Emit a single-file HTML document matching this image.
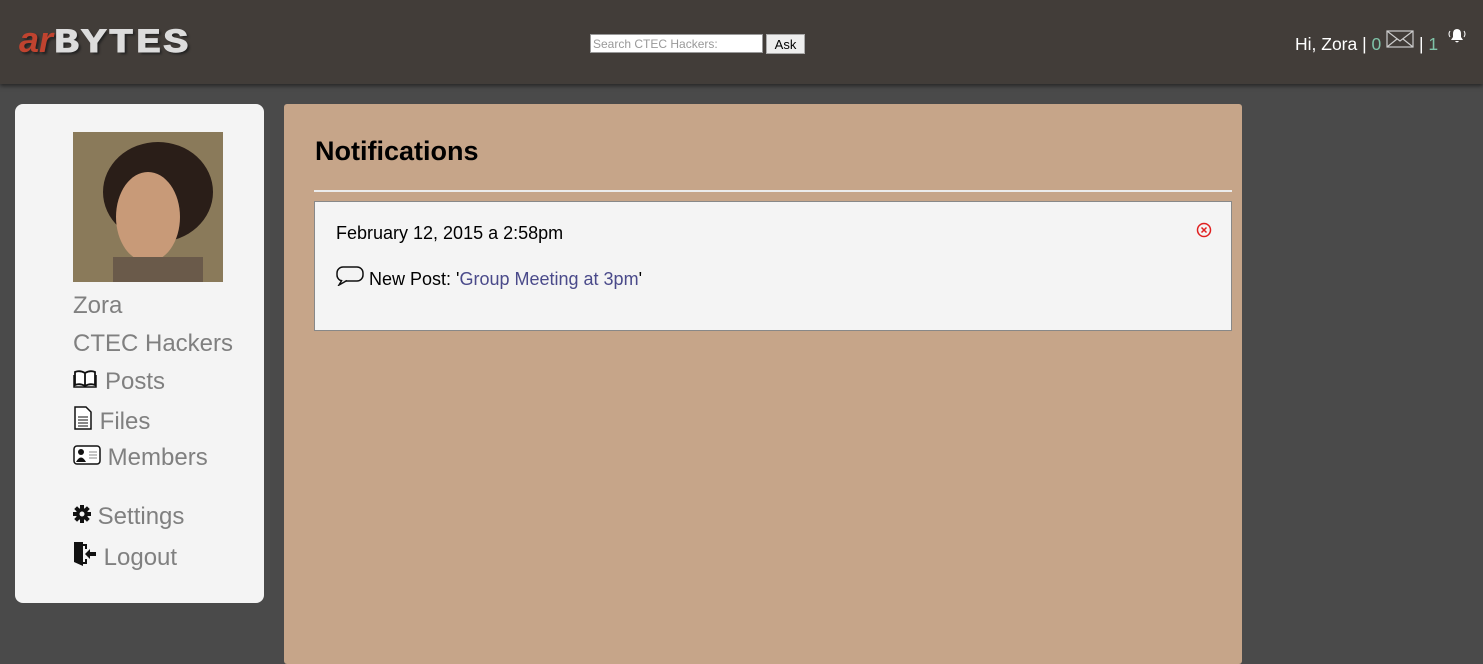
<!DOCTYPE html>
<html><head><meta charset="utf-8"><style>
*{margin:0;padding:0;box-sizing:border-box}
body{width:1483px;height:644px;overflow:hidden;background:#4a4a4a;font-family:"Liberation Sans",sans-serif;position:relative}
.hdr{position:absolute;left:0;top:0;width:1483px;height:84px;background:#423d39;box-shadow:0 2px 4px rgba(0,0,0,.5)}
.logo{position:absolute;left:19px;top:22px;font-size:36px;line-height:36px;font-weight:bold;text-shadow:2px 2px 2px #222;white-space:nowrap}
.logo .a{color:#c0432f;font-style:italic}
.logo .b{display:inline-block;color:#dcdcdc;font-family:"Liberation Mono",monospace;font-size:34px;letter-spacing:2px;transform:scaleX(1.22);transform-origin:left;margin-left:1px;-webkit-text-stroke:1px #dcdcdc}
.search{position:absolute;left:590px;top:34px}
.search input{width:173px;height:19px;border:1px solid #999;font-size:12px;padding:0 2px;color:#999;font-family:"Liberation Sans",sans-serif;vertical-align:top}
.search button{width:39px;height:20px;margin-left:3px;font-size:13px;background:#eee;border:1px solid #aaa;vertical-align:top;font-family:"Liberation Sans",sans-serif}
.user{position:absolute;left:1295px;top:28px;color:#fff;font-size:17.5px;white-space:nowrap}
.user .g{color:#7fc3a8}
.side{position:absolute;left:15px;top:104px;width:249px;height:499px;background:#f4f4f4;border-radius:8px}
.side .av{position:absolute;left:58px;top:28px;width:150px;height:150px;background:#5a4a36;overflow:hidden}
.side .t{position:absolute;left:58px;color:#808080;font-size:24px}
.main{position:absolute;left:284px;top:104px;width:958px;height:560px;background:#c6a589;border-radius:3px}
.main h1{position:absolute;left:31px;top:32px;font-size:27px;color:#000}
.main .hr{position:absolute;left:30px;top:86px;width:918px;height:2px;background:#ececec}
.card{position:absolute;left:30px;top:97px;width:918px;height:130px;background:#f4f4f4;border:1px solid #888}
.card .d{position:absolute;left:21px;top:21px;font-size:18px}
.card .p{position:absolute;left:21px;top:64px;font-size:18px}
.card a{color:#4a4a8a;text-decoration:none}
</style></head><body>
<div class="hdr">
<div class="logo"><span class="a">ar</span><span class="b">BYTES</span></div>
<div class="search"><input value="Search CTEC Hackers:"><button>Ask</button></div>
<div class="user">Hi, Zora | <span class="g">0</span> <svg width="28" height="18" viewBox="0 0 28 18" style="vertical-align:2px"><rect x="1" y="1" width="26" height="16" fill="none" stroke="#ccc" stroke-width="1.2"/><path d="M1 1 L14 11 L27 1 M1 17 L11 9 M27 17 L17 9" fill="none" stroke="#ccc" stroke-width="1.2"/></svg> | <span class="g">1</span> &nbsp;<svg width="18" height="16" viewBox="0 0 18 16" style="vertical-align:6px"><path d="M9 1 Q5 1 5 6 V9 L3 12 H15 L13 9 V6 Q13 1 9 1Z M7 13 Q9 16 11 13Z" fill="#fff"/><path d="M2 3 Q0 6 2 9 M16 3 Q18 6 16 9" stroke="#fff" fill="none"/></svg></div>
</div>
<div class="side">
<div class="av"><svg width="150" height="150"><rect width="150" height="150" fill="#8a7a5a"/><ellipse cx="85" cy="60" rx="55" ry="50" fill="#2a1e18"/><ellipse cx="75" cy="85" rx="32" ry="45" fill="#c89a78"/><rect x="40" y="125" width="90" height="30" fill="#6a5a4a"/></svg></div>
<div class="t" style="top:188px">Zora</div>
<div class="t" style="top:226px">CTEC Hackers</div>
<div class="t" style="top:264px"><svg width="24" height="18" viewBox="0 0 24 18" style="vertical-align:1px;margin-right:8px"><path d="M12 3 Q7 0 2 2 V15 Q7 13 12 16 Q17 13 22 15 V2 Q17 0 12 3 Z M12 3 V16" fill="#fff" stroke="#111" stroke-width="1.8"/><path d="M1 5 V17 H23 V5" fill="none" stroke="#111" stroke-width="1.5"/></svg>Posts</div>
<div class="t" style="top:302px"><svg width="20" height="24" viewBox="0 0 20 24" style="vertical-align:-1px"><path d="M2 1 H13 L18 6 V23 H2 Z" fill="#fff" stroke="#111" stroke-width="1.5"/><path d="M5 11H15M5 14H15M5 17H15M5 20H15" stroke="#111"/></svg> Files</div>
<div class="t" style="top:340px"><svg width="28" height="20" viewBox="0 0 28 20" style="vertical-align:0"><rect x="1" y="1" width="26" height="18" rx="3" fill="#fff" stroke="#111" stroke-width="1.5"/><circle cx="8" cy="7" r="3" fill="#111"/><path d="M3 17 Q8 8 13 17Z" fill="#111"/><path d="M16 7H24M16 10H24M16 13H24" stroke="#888"/></svg> Members</div>
<div class="t" style="top:399px"><svg width="18" height="18" viewBox="0 0 18 18" style="vertical-align:1px"><g fill="#111"><circle cx="9" cy="9" r="6"/><rect x="7" y="0" width="4" height="18"/><rect x="0" y="7" width="18" height="4"/><rect x="7" y="0" width="4" height="18" transform="rotate(45 9 9)"/><rect x="7" y="0" width="4" height="18" transform="rotate(-45 9 9)"/></g><circle cx="9" cy="9" r="2.5" fill="#f4f4f4"/></svg> Settings</div>
<div class="t" style="top:437px"><svg width="24" height="26" viewBox="0 0 24 26" style="vertical-align:-2px"><path d="M1 1 H10 V25 L1 21 Z" fill="#111"/><path d="M10 4 H13 V8 M13 18 V22 H10" stroke="#111" fill="none" stroke-width="2"/><path d="M12 13 L17 8 V11 H23 V15 H17 V18 Z" fill="#111"/></svg> Logout</div>
</div>
<div class="main">
<h1>Notifications</h1>
<div class="hr"></div>
<div class="card">
<div class="d">February 12, 2015 a 2:58pm</div>
<svg width="16" height="16" viewBox="0 0 16 16" style="position:absolute;right:19px;top:20px"><circle cx="8" cy="8" r="6.5" fill="none" stroke="#e02020" stroke-width="1.5"/><path d="M5.5 5.5 L10.5 10.5 M10.5 5.5 L5.5 10.5" stroke="#e02020" stroke-width="1.5"/></svg>
<div class="p"><svg width="28" height="20" viewBox="0 0 28 20" style="vertical-align:-1px"><rect x="1" y="1" width="26" height="14" rx="6" fill="none" stroke="#111" stroke-width="1.5"/><path d="M6 14 L3 19 L11 14.5" fill="#f4f4f4" stroke="#111" stroke-width="1.5"/></svg> New Post: '<a>Group Meeting at 3pm</a>'</div>
</div>
</div>
</body></html>
